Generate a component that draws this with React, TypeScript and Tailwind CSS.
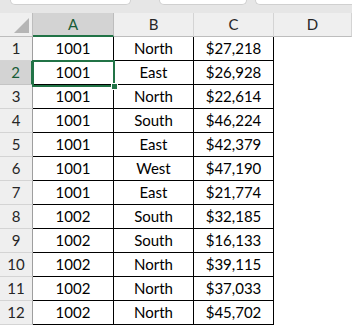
const rows: [string, string, string][] = [
  ["1001", "North", "$27,218"],
  ["1001", "East", "$26,928"],
  ["1001", "North", "$22,614"],
  ["1001", "South", "$46,224"],
  ["1001", "East", "$42,379"],
  ["1001", "West", "$47,190"],
  ["1001", "East", "$21,774"],
  ["1002", "South", "$32,185"],
  ["1002", "South", "$16,133"],
  ["1002", "North", "$39,115"],
  ["1002", "North", "$37,033"],
  ["1002", "North", "$45,702"],
];

const cols = ["A", "B", "C", "D"];

export default function App() {
  return (
    <div
      className="w-[352px] h-[326px] bg-white overflow-hidden text-[15px] text-black"
      style={{ fontFamily: "Lato, 'Liberation Sans', sans-serif" }}
    >
      {/* toolbar remnants */}
      <div className="h-[13px] bg-[#e6e6e6] flex items-start pl-[10px]">
        <div className="w-[125px] h-[5px] bg-white border border-t-0 border-[#d0d0d0] rounded-b-[5px]" />
        <div className="w-[90px] h-[5px] bg-white border border-t-0 border-[#d0d0d0] rounded-b-[5px] ml-[28px]" />
        <div className="w-[100px] h-[5px] bg-white border border-t-0 border-r-0 border-[#d0d0d0] rounded-bl-[5px] ml-[8px]" />
      </div>

      <div className="relative">
        <div className="grid grid-cols-[33px_81px_80px_80px_1fr] auto-rows-[24px]">
          {/* corner */}
          <div className="bg-[#efefef] border-r border-b border-[#bdbdbd] flex items-end justify-end p-[3px]">
            <svg width="15" height="15" viewBox="0 0 15 15">
              <polygon points="15,0 15,15 0,15" fill="#b5b5b5" />
            </svg>
          </div>
          {cols.map((c) => (
            <div
              key={c}
              className={
                c === "A"
                  ? "bg-[#d3d3d3] border-r border-[#bdbdbd] border-b-2 border-b-[#217346] flex items-center justify-center text-[#185c37]"
                  : "bg-[#efefef] border-r border-b border-[#d4d4d4] border-b-[#bdbdbd] flex items-center justify-center text-[#262626]"
              }
            >
              {c}
            </div>
          ))}

          {rows.map((r, i) => {
            const sel = i === 1;
            return [
              <div
                key={`h${i}`}
                className={
                  sel
                    ? "bg-[#d3d3d3] border-b border-[#c4c4c4] border-r-2 border-r-[#217346] flex items-center justify-center text-[#185c37]"
                    : "bg-[#efefef] border-b border-[#d4d4d4] border-r border-r-[#9e9e9e] flex items-center justify-center text-[#262626]"
                }
              >
                {i + 1}
              </div>,
              ...r.map((v, j) => (
                <div
                  key={`c${i}-${j}`}
                  className="border-r border-b border-black flex items-center justify-center"
                >
                  {v}
                </div>
              )),
              <div key={`d${i}`} className="bg-white" />,
            ];
          })}
        </div>

        {/* active cell A2 */}
        <div className="absolute left-[32px] top-[47px] w-[83px] h-[27px] border-2 border-[#217346] pointer-events-none">
          <div className="absolute -right-[5px] -bottom-[5px] w-[7px] h-[7px] bg-[#217346] border border-white" />
        </div>
      </div>
    </div>
  );
}
